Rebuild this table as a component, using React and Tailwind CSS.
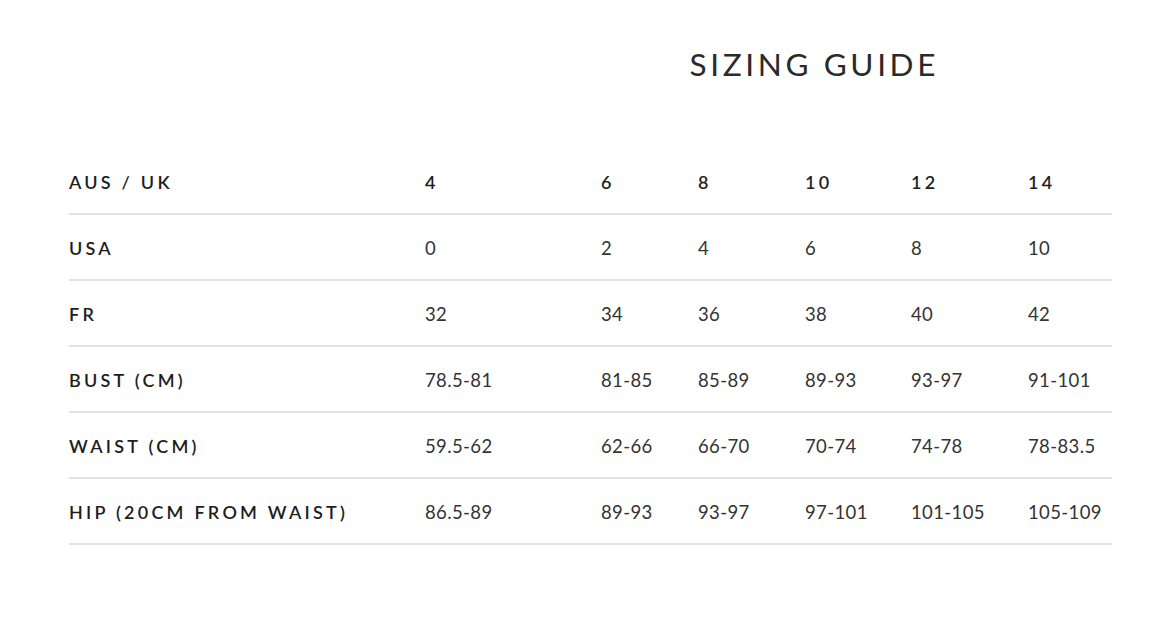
const sizes = [
    { label: "AUS / UK", values: ["4", "6", "8", "10", "12", "14"], head: true },
    { label: "USA", values: ["0", "2", "4", "6", "8", "10"] },
    { label: "FR", values: ["32", "34", "36", "38", "40", "42"] },
    { label: "BUST (CM)", values: ["78.5-81", "81-85", "85-89", "89-93", "93-97", "91-101"] },
    { label: "WAIST (CM)", values: ["59.5-62", "62-66", "66-70", "70-74", "74-78", "78-83.5"] },
    { label: "HIP (20CM FROM WAIST)", values: ["86.5-89", "89-93", "93-97", "97-101", "101-105", "105-109"] },
];

const App = () => {
    return (
        <div className="w-[1150px] h-[642px] bg-white text-[#222] font-['Lato',sans-serif]">
            <div className="flex justify-end pr-[211px] pt-[44px]">
                <h1 className="text-[31.5px] tracking-[0.115em] leading-[40px] font-normal text-[#2a2a2a]">
                    SIZING GUIDE
                </h1>
            </div>

            <div className="ml-[69px] mt-[65px] w-[1043px]">
                {sizes.map((row) => (
                    <div
                        key={row.label}
                        className="grid grid-cols-[356px_176px_97px_107px_106px_117px_84px] items-center h-[66px] pt-[3px] border-b-2 border-[#e2e2e2]"
                    >
                        <span className="text-[18px] font-semibold tracking-[0.18em] text-[#1e1e1e]">
                            {row.label}
                        </span>
                        {row.values.map((v, i) => (
                            <span
                                key={i}
                                className={
                                    row.head
                                        ? "text-[18px] font-semibold tracking-[0.18em] text-[#1e1e1e]"
                                        : "text-[18.5px] tracking-[0.02em] text-[#333]"
                                }
                            >
                                {v}
                            </span>
                        ))}
                    </div>
                ))}
            </div>
        </div>
    );
};

export default App;
